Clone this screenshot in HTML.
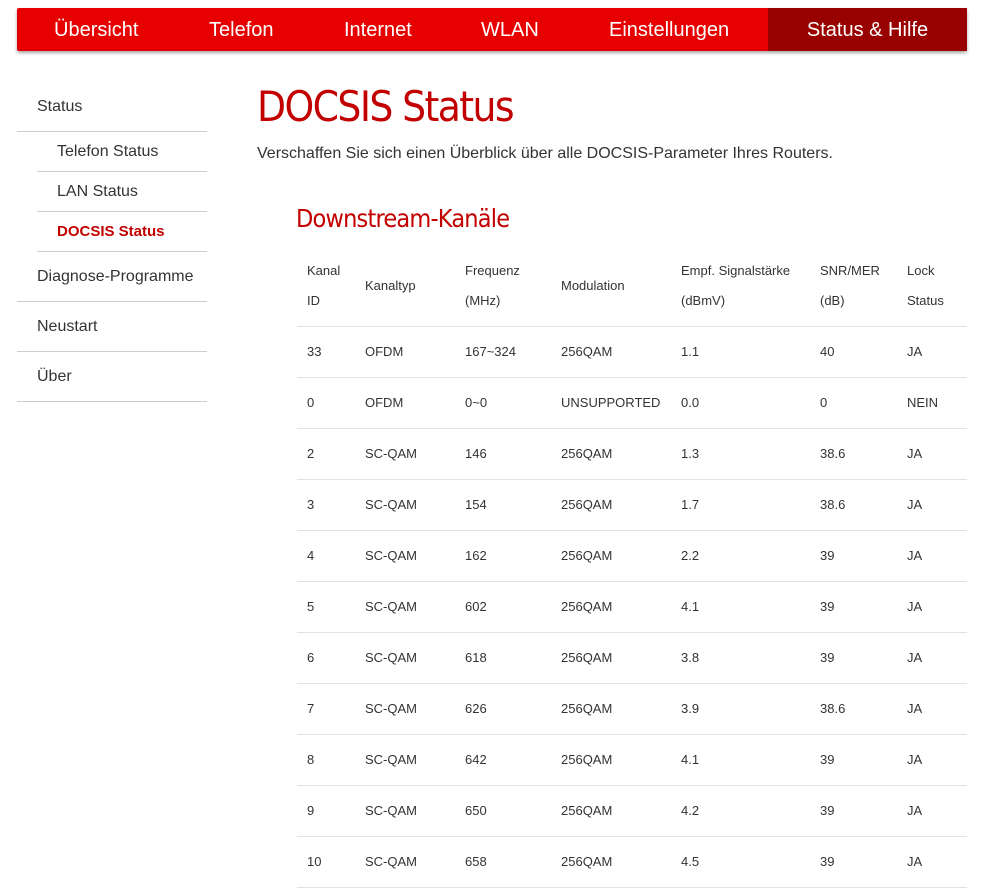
<!DOCTYPE html>
<html><head><meta charset="utf-8"><style>
body{margin:0;background:#fff;font-family:"Liberation Sans",Arial,sans-serif;color:#333;width:983px;height:892px;overflow:hidden;position:relative}
.nav{position:absolute;left:17px;top:8px;width:950px;height:43px;background:#e60000;box-shadow:0 2px 3px rgba(0,0,0,.35);border-radius:2px}
.nav span{position:absolute;top:1px;line-height:43px;color:#fff;font-size:20px}
.nav .act{background:#990000;top:0;height:43px;left:751px;width:199px;text-align:center;line-height:45px}
.si{position:absolute;font-size:16px;color:#333}
.ln{position:absolute;height:1px;background:#ccc}
h1{position:absolute;left:257px;top:82px;margin:0;font-weight:normal;font-size:42px;color:#c20000;font-family:"DejaVu Sans Condensed","Liberation Sans",sans-serif;letter-spacing:-1.6px}
.sub{position:absolute;left:257px;top:145px;font-size:16px}
h2{position:absolute;left:296px;top:204px;margin:0;font-weight:normal;font-size:25px;color:#c20000;font-family:"DejaVu Sans Condensed","Liberation Sans",sans-serif;letter-spacing:-0.8px}
.t{position:absolute;font-size:13px;color:#333;white-space:nowrap}
.rl{position:absolute;left:297px;width:670px;height:1px;background:#e2e2e2}
</style></head><body>
<div class="nav">
<span style="left:37px">Übersicht</span>
<span style="left:192px">Telefon</span>
<span style="left:327px">Internet</span>
<span style="left:464px">WLAN</span>
<span style="left:592px">Einstellungen</span>
<span class="act">Status &amp; Hilfe</span>
</div>
<div class="si" style="left:37px;top:98px">Status</div>
<div class="ln" style="left:17px;width:190px;top:131px"></div>
<div class="si" style="left:57px;top:143px">Telefon Status</div>
<div class="ln" style="left:37px;width:170px;top:171px"></div>
<div class="si" style="left:57px;top:183px">LAN Status</div>
<div class="ln" style="left:37px;width:170px;top:211px"></div>
<div class="si" style="left:57px;top:223px;color:#c20000;font-weight:bold;font-size:15px">DOCSIS Status</div>
<div class="ln" style="left:37px;width:170px;top:251px"></div>
<div class="si" style="left:37px;top:268px">Diagnose-Programme</div>
<div class="ln" style="left:17px;width:190px;top:301px"></div>
<div class="si" style="left:37px;top:318px">Neustart</div>
<div class="ln" style="left:17px;width:190px;top:351px"></div>
<div class="si" style="left:37px;top:368px">Über</div>
<div class="ln" style="left:17px;width:190px;top:401px"></div>
<h1>DOCSIS Status</h1>
<div class="sub">Verschaffen Sie sich einen Überblick über alle DOCSIS-Parameter Ihres Routers.</div>
<h2>Downstream-Kanäle</h2>
<div class="t" style="left:307px;top:263px">Kanal</div><div class="t" style="left:307px;top:293px">ID</div>
<div class="t" style="left:365px;top:278px">Kanaltyp</div>
<div class="t" style="left:465px;top:263px">Frequenz</div><div class="t" style="left:465px;top:293px">(MHz)</div>
<div class="t" style="left:561px;top:278px">Modulation</div>
<div class="t" style="left:681px;top:263px">Empf. Signalstärke</div><div class="t" style="left:681px;top:293px">(dBmV)</div>
<div class="t" style="left:820px;top:263px">SNR/MER</div><div class="t" style="left:820px;top:293px">(dB)</div>
<div class="t" style="left:907px;top:263px">Lock</div><div class="t" style="left:907px;top:293px">Status</div>
<div id="rows"></div>
<script>
var d=[["33","OFDM","167~324","256QAM","1.1","40","JA"],["0","OFDM","0~0","UNSUPPORTED","0.0","0","NEIN"],["2","SC-QAM","146","256QAM","1.3","38.6","JA"],["3","SC-QAM","154","256QAM","1.7","38.6","JA"],["4","SC-QAM","162","256QAM","2.2","39","JA"],["5","SC-QAM","602","256QAM","4.1","39","JA"],["6","SC-QAM","618","256QAM","3.8","39","JA"],["7","SC-QAM","626","256QAM","3.9","38.6","JA"],["8","SC-QAM","642","256QAM","4.1","39","JA"],["9","SC-QAM","650","256QAM","4.2","39","JA"],["10","SC-QAM","658","256QAM","4.5","39","JA"]];
var x=[307,365,465,561,681,820,907],h="";
for(var i=0;i<d.length;i++){var y=326+51*i;h+='<div class="rl" style="top:'+y+'px"></div>';for(var j=0;j<7;j++)h+='<div class="t" style="left:'+x[j]+'px;top:'+(y+18)+'px">'+d[i][j]+'</div>';}
h+='<div class="rl" style="top:'+(326+51*11)+'px"></div>';
document.getElementById("rows").innerHTML=h;
</script>
</body></html>
